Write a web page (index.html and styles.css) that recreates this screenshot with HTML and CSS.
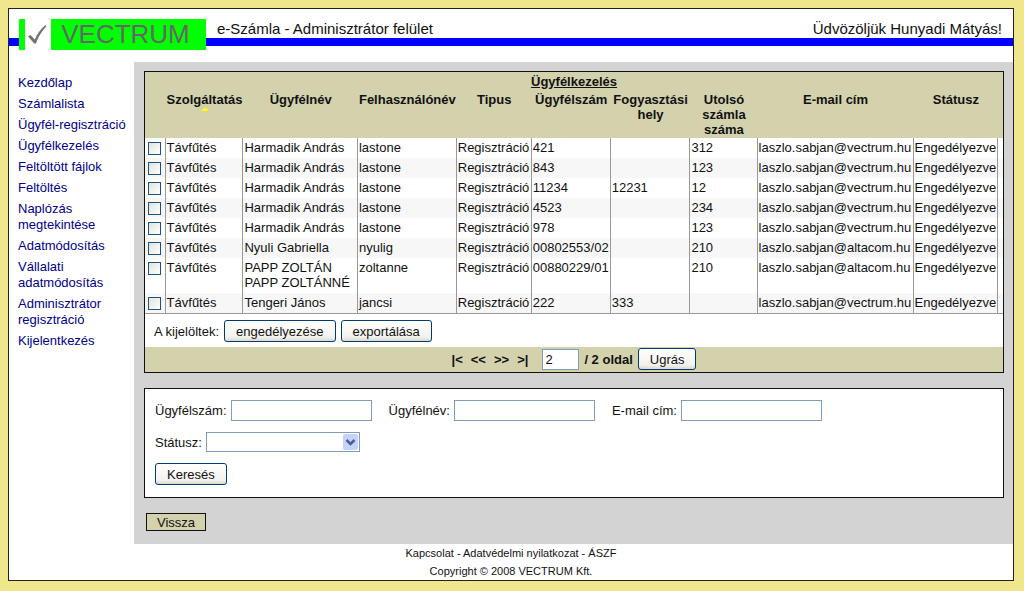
FILE: index.html
```html
<!DOCTYPE html>
<html lang="hu">
<head>
<meta charset="utf-8">
<title>e-Számla - Adminisztrátor felület</title>
<link rel="stylesheet" href="styles.css">
</head>
<body>
<div class="page">
  <header class="header">
    <div class="logo">
      <span class="logo-bar"></span>
      <svg class="logo-check" width="26" height="31" viewBox="0 0 26 31" aria-hidden="true"><path d="M3 17.500 5.500 16 9.800 20.500C12 15 15.500 10 20.500 6L21.300 7.500C16.800 12 13.800 17 11 24.500H9.200Z" fill="#737373"/></svg>
      <span class="logo-name">VECTRUM</span>
    </div>
    <div class="title">e-Számla - Adminisztrátor felület</div>
    <div class="welcome">Üdvözöljük Hunyadi Mátyás!</div>
  </header>
  <div class="body">
    <nav class="menu">
      <a href="#">Kezdőlap</a>
      <a href="#">Számlalista</a>
      <a href="#">Ügyfél-regisztráció</a>
      <a href="#">Ügyfélkezelés</a>
      <a href="#">Feltöltött fájlok</a>
      <a href="#">Feltöltés</a>
      <a href="#">Naplózás megtekintése</a>
      <a href="#">Adatmódosítás</a>
      <a href="#">Vállalati adatmódosítás</a>
      <a href="#">Adminisztrátor regisztráció</a>
      <a href="#">Kijelentkezés</a>
    </nav>
    <main class="main">
      <form class="panel">
        <table class="grid">
          <caption>Ügyfélkezelés</caption>
          <colgroup>
            <col class="c-check"><col class="c-service"><col class="c-name"><col class="c-user"><col class="c-type"><col class="c-number"><col class="c-place"><col class="c-last"><col class="c-mail"><col class="c-status"><col class="c-end">
          </colgroup>
          <thead>
            <tr>
              <th></th>
              <th>Szolgáltatás<svg class="sort" width="8" height="4" viewBox="0 0 8 4" aria-hidden="true"><path d="M4 0 8 4H0Z" fill="#ffff00"/></svg></th>
              <th>Ügyfélnév</th>
              <th>Felhasználónév</th>
              <th>Tipus</th>
              <th>Ügyfélszám</th>
              <th>Fogyasztási hely</th>
              <th>Utolsó számla száma</th>
              <th>E-mail cím</th>
              <th>Státusz</th>
              <th></th>
            </tr>
          </thead>
          <tbody>
            <tr><td><input type="checkbox" aria-label="Harmadik András 421"></td><td>Távfűtés</td><td>Harmadik András</td><td>lastone</td><td>Regisztráció</td><td>421</td><td></td><td>312</td><td>laszlo.sabjan@vectrum.hu</td><td>Engedélyezve</td><td></td></tr>
            <tr><td><input type="checkbox" aria-label="Harmadik András 843"></td><td>Távfűtés</td><td>Harmadik András</td><td>lastone</td><td>Regisztráció</td><td>843</td><td></td><td>123</td><td>laszlo.sabjan@vectrum.hu</td><td>Engedélyezve</td><td></td></tr>
            <tr><td><input type="checkbox" aria-label="Harmadik András 11234"></td><td>Távfűtés</td><td>Harmadik András</td><td>lastone</td><td>Regisztráció</td><td>11234</td><td>12231</td><td>12</td><td>laszlo.sabjan@vectrum.hu</td><td>Engedélyezve</td><td></td></tr>
            <tr><td><input type="checkbox" aria-label="Harmadik András 4523"></td><td>Távfűtés</td><td>Harmadik András</td><td>lastone</td><td>Regisztráció</td><td>4523</td><td></td><td>234</td><td>laszlo.sabjan@vectrum.hu</td><td>Engedélyezve</td><td></td></tr>
            <tr><td><input type="checkbox" aria-label="Harmadik András 978"></td><td>Távfűtés</td><td>Harmadik András</td><td>lastone</td><td>Regisztráció</td><td>978</td><td></td><td>123</td><td>laszlo.sabjan@vectrum.hu</td><td>Engedélyezve</td><td></td></tr>
            <tr><td><input type="checkbox" aria-label="Nyuli Gabriella"></td><td>Távfűtés</td><td>Nyuli Gabriella</td><td>nyulig</td><td>Regisztráció</td><td>00802553/02</td><td></td><td>210</td><td>laszlo.sabjan@altacom.hu</td><td>Engedélyezve</td><td></td></tr>
            <tr><td><input type="checkbox" aria-label="PAPP ZOLTÁN"></td><td>Távfűtés</td><td>PAPP ZOLTÁN<br>PAPP ZOLTÁNNÉ</td><td>zoltanne</td><td>Regisztráció</td><td>00880229/01</td><td></td><td>210</td><td>laszlo.sabjan@altacom.hu</td><td>Engedélyezve</td><td></td></tr>
            <tr><td><input type="checkbox" aria-label="Tengeri János"></td><td>Távfűtés</td><td>Tengeri János</td><td>jancsi</td><td>Regisztráció</td><td>222</td><td>333</td><td></td><td>laszlo.sabjan@vectrum.hu</td><td>Engedélyezve</td><td></td></tr>
          </tbody>
        </table>
        <div class="actions">
          <span>A kijelöltek:</span>
          <button type="button" class="btn">engedélyezése</button>
          <button type="button" class="btn">exportálása</button>
        </div>
        <div class="pager">
          <div class="pager-links">
            <a href="#">|&lt;</a>
            <a href="#">&lt;&lt;</a>
            <a href="#">&gt;&gt;</a>
            <a href="#">&gt;|</a>
          </div>
          <input class="field field-page" type="text" value="2" aria-label="Oldal">
          <span>/ 2 oldal</span>
          <button type="button" class="btn">Ugrás</button>
        </div>
      </form>
      <form class="panel search">
        <div class="search-row">
          <label class="pair">Ügyfélszám: <input class="field" type="text"></label>
          <label class="pair">Ügyfélnév: <input class="field" type="text"></label>
          <label class="pair">E-mail cím: <input class="field" type="text"></label>
        </div>
        <div class="search-row">
          <label class="pair" for="status">Státusz:
            <span class="select-box">
              <select id="status" class="select"><option></option></select>
              <svg class="select-arrow" width="15" height="16" viewBox="0 0 15 16" aria-hidden="true"><rect width="15" height="16" rx="2" fill="#c3d3fb"/><path d="M3.500 6 7.500 10 11.500 6" fill="none" stroke="#4d6185" stroke-width="2.500"/></svg>
            </span>
          </label>
        </div>
        <button type="button" class="btn">Keresés</button>
      </form>
      <button type="button" class="back">Vissza</button>
    </main>
  </div>
  <footer class="footer">
    <div><a href="#">Kapcsolat</a> - <a href="#">Adatvédelmi nyilatkozat</a> - <a href="#">ÁSZF</a></div>
    <div>Copyright © 2008 VECTRUM Kft.</div>
  </footer>
</div>
</body>
</html>
```
FILE: styles.css
```css
* { box-sizing: border-box; }

body {
  margin: 0;
  padding: 8px 10px 10px 8px;
  background: #f0e68c;
  color: #111;
  font: 13px/15px "Liberation Sans", Arial, sans-serif;
}

a { color: inherit; text-decoration: none; }

button, input, select { font: inherit; color: inherit; margin: 0; }

.page {
  background: #fff;
  border: 1px solid #222;
}

.header {
  display: flex;
  align-items: flex-start;
  padding: 10px 11px 12px 10px;
  background: linear-gradient(#00f, #00f) 0 29px / 100% 8px no-repeat;
  font-size: 15px;
  line-height: 20px;
}

.logo {
  display: flex;
  height: 31px;
  background: #fff;
}

.logo-bar { width: 6px; background: #0f0; }

.logo-name {
  width: 155px;
  padding-right: 6px;
  background: #0f0;
  color: #666;
  font-size: 26px;
  line-height: 31px;
  text-align: center;
}

.title { padding-left: 11px; }

.welcome { margin-left: auto; }

.body { display: flex; }

.menu {
  flex: 0 0 125px;
  min-width: 0;
  display: flex;
  flex-direction: column;
  gap: 5px;
  padding: 13px 4px 13px 9px;
  color: #00008b;
  line-height: 16px;
}

.main {
  flex: 1;
  min-width: 0;
  padding: 9px 9px 13px 10px;
  background: #d3d3d3;
}

.panel {
  margin-bottom: 15px;
  background: #fff;
  border: 1px solid #111;
}

.grid {
  width: 100%;
  border-collapse: separate;
  border-spacing: 0;
  border-bottom: 1px solid #999;
}

.grid caption {
  padding: 2px 0;
  background: #d3d2ad;
  font-weight: bold;
  text-decoration: underline;
}

.grid th {
  padding: 1px;
  background: #d3d2ad;
  vertical-align: top;
}

.grid td {
  height: 20px;
  padding: 2px 1px 3px;
  border-right: 1px solid #999;
  vertical-align: top;
  white-space: nowrap;
}

.grid td:last-child { border-right: 0; }

.grid tbody tr:nth-child(even) { background: #f7f7f7; }

.c-check { width: 21px; }
.c-service { width: 77px; }
.c-name { width: 115px; }
.c-user { width: 97px; }
.c-type { width: 75px; }
.c-number { width: 79px; }
.c-place { width: 80px; }
.c-last { width: 69px; }
.c-mail { width: 156px; }
.c-status { width: 84px; }
.c-end { width: 5px; }

.sort { display: block; margin: 0 auto; }

.grid input {
  appearance: none;
  display: block;
  width: 13px;
  height: 13px;
  margin: 2px auto 0;
  background: linear-gradient(135deg, #e2e2dd, #fff);
  border: 1px solid #1c5180;
}

.actions {
  display: flex;
  align-items: center;
  gap: 5px;
  padding: 6px 9px 5px;
}

.btn {
  height: 22px;
  padding: 0 11px;
  background: linear-gradient(#fff, #f3f2ec 80%, #dcd8cf);
  border: 1px solid #003c74;
  border-radius: 3px;
}

.pager {
  display: flex;
  justify-content: center;
  align-items: center;
  gap: 5px;
  padding: 1px 0 2px;
  background: #d3d2ad;
  font-weight: bold;
}

.pager .btn, .pager .field { font-weight: normal; }

.pager-links { display: flex; gap: 8px; padding-right: 9px; }

.field {
  width: 141px;
  height: 21px;
  padding: 0 2px;
  background: #fff;
  border: 1px solid #7f9db9;
}

.field-page { width: 37px; }

.search { padding: 11px 11px 12px 10px; }

.search-row {
  display: flex;
  gap: 17px;
  margin-bottom: 11px;
}

.pair { display: flex; align-items: center; gap: 4px; }

.select-box { position: relative; display: flex; }

.select {
  appearance: none;
  width: 154px;
  height: 20px;
  background: #fff;
  border: 1px solid #7f9db9;
  border-radius: 0;
}

.select-arrow {
  position: absolute;
  top: 2px;
  right: 2px;
  pointer-events: none;
}

.back {
  display: block;
  height: 18px;
  margin-left: 2px;
  padding: 0 10px;
  background: #d3d2ad;
  border: 1px solid #111;
}

.footer {
  font-size: 11px;
  line-height: 18px;
  text-align: center;
}
```
